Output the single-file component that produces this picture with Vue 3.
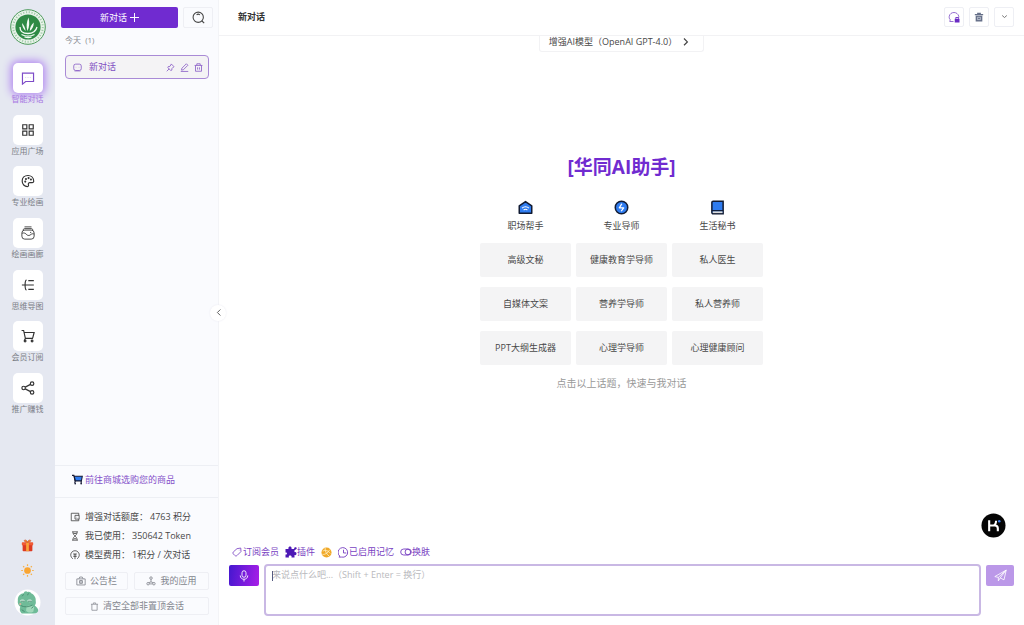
<script setup>
import { ref } from 'vue'

const draft = ref('')
const active = ref('chat')

const navItems = [
  { id: 'chat', label: '智能对话' },
  { id: 'apps', label: '应用广场' },
  { id: 'paint', label: '专业绘画' },
  { id: 'gallery', label: '绘画画廊' },
  { id: 'mind', label: '思维导图' },
  { id: 'cart', label: '会员订阅' },
  { id: 'share', label: '推广赚钱' },
]

const columns = [
  { icon: 'home', title: '职场帮手', topics: ['高级文秘', '自媒体文案', 'PPT大纲生成器'] },
  { icon: 'bolt', title: '专业导师', topics: ['健康教育学导师', '营养学导师', '心理学导师'] },
  { icon: 'book', title: '生活秘书', topics: ['私人医生', '私人营养师', '心理健康顾问'] },
]
</script>

<template>
  <div class="app">
    <aside class="rail">
      <svg class="logo" viewBox="0 0 36 36" aria-label="校徽">
        <circle cx="18" cy="18" r="17.3" fill="#e9f3ea" stroke="#4b9a59" stroke-width="1" />
        <circle cx="18" cy="18" r="14.8" fill="none" stroke="#a3cdab" stroke-width="2" stroke-dasharray="1.200 1.600" />
        <circle cx="18" cy="18" r="12.6" fill="#2f8a45" />
        <path d="M17.500 22c-1.500-4-1-9 1-13.500 1.200 4.500 1 9.500-1 13.500zM15.500 22c-2-2-3.500-5-3.500-8 2 2 3.500 5 3.500 8zM19.800 22c0-3.500 1.500-6.500 4-8.500 0 4-1.500 6.500-4 8.500z" fill="#f3fbf4" />
        <path d="M10 18c0 4 3 6.500 8 6.500s8-2.500 9-6.500M11.500 25.500c4 2 9 2 13 0M14.500 28c2.500.8 5 .8 7 0" fill="none" stroke="#f3fbf4" stroke-width="1.300" />
      </svg>

      <nav class="nav">
        <button
          v-for="item in navItems"
          :key="item.id"
          type="button"
          class="nav-item"
          :class="{ active: active === item.id }"
          @click="active = item.id"
        >
          <span class="nav-box">
            <svg v-if="item.id === 'chat'" viewBox="0 0 24 24" class="line">
              <path d="M2.500 3.500h19V18H8l-5.500 4.500z" />
              <path d="M8 10.500v.6M12 10.500v.6M16 10.500v.6" stroke-width="1.200" />
            </svg>
            <svg v-else-if="item.id === 'apps'" viewBox="0 0 24 24" class="line">
              <path d="M3 3h7v7H3zM14 3h7v7h-7zM3 14h7v7H3zM14 14h7v7h-7z" />
            </svg>
            <svg v-else-if="item.id === 'paint'" viewBox="0 0 24 24" class="line">
              <path d="M12 2.500C6 2.500 2 6.500 2 12s4 9.500 9 9.500c1.800 0 2.300-1.300 1.800-2.700-.8-2.200.2-4 2.500-4H19c2 0 3-1.300 2.800-3C21.500 6 17 2.500 12 2.500z" />
              <circle cx="7.300" cy="13" r=".8" /><circle cx="8.500" cy="8.500" r=".8" /><circle cx="13" cy="7" r=".8" /><circle cx="17" cy="9.500" r=".8" />
            </svg>
            <svg v-else-if="item.id === 'gallery'" viewBox="0 0 24 24" class="line thin">
              <path d="M6 1.500h12M4 7c0-2 1-2.500 2-2.500h12c1 0 2 .5 2 2.500" />
              <rect x="1.500" y="7" width="21" height="15.500" rx="5" />
              <path d="M2 12.500c3-1.500 6 0 8 2.500 2 2 5 1.500 7-.5 2-1.500 4-1.500 5.500-.5M15.500 11h2" />
            </svg>
            <svg v-else-if="item.id === 'mind'" viewBox="0 0 24 24" class="line">
              <path d="M1.500 12h20.500M12.500 4.500h9.500M12.500 19.500h9.500M9.500 3.500c-2.500 0-2.500 3-2.500 8.500s0 8.500 2.500 8.500" />
            </svg>
            <svg v-else-if="item.id === 'cart'" viewBox="0 0 24 24" class="line">
              <path d="M1 2.500h3.500l3 13.500h13M5.500 6h17L20 15.500M7.500 16l-1.500 3.500" />
              <circle cx="7" cy="20.500" r="1.500" /><circle cx="19" cy="20.500" r="1.500" />
            </svg>
            <svg v-else viewBox="0 0 24 24" class="line">
              <circle cx="4.500" cy="12" r="3" /><circle cx="19" cy="4.500" r="3" /><circle cx="19" cy="19.500" r="3" />
              <path d="M7.300 10.500l9-4.700M7.300 13.500l9 4.700" />
            </svg>
          </span>
          <span class="nav-label">{{ item.label }}</span>
        </button>
      </nav>

      <div class="rail-foot">
        <button type="button" class="plain" aria-label="礼物">
          <svg viewBox="0 0 24 24" width="13" height="13">
            <rect x="3" y="10" width="18" height="12.500" rx="1.500" fill="#dd3a22" />
            <rect x="1.500" y="6" width="21" height="5.500" rx="1.200" fill="#f05a35" />
            <rect x="9.500" y="6" width="5" height="16.500" fill="#f9a33c" />
            <path d="M12 6C9 6 5.500 5 6 2.800 6.800.5 11 2 12 6zM12 6c3 0 6.500-1 6-3.200C17.200.5 13 2 12 6z" fill="#f08a2c" stroke="#c9401f" />
          </svg>
        </button>
        <button type="button" class="plain" aria-label="浅色主题">
          <svg viewBox="0 0 24 24" width="13" height="13">
            <circle cx="12" cy="12" r="6.200" fill="#f9a533" />
            <path d="M12 .5v3M12 20.500v3M.5 12h3M20.500 12h3M3.900 3.900L6 6M18 18l2.100 2.100M3.900 20.100L6 18M18 6l2.100-2.100" stroke="#f6b04a" stroke-width="2.200" />
          </svg>
        </button>
        <button type="button" class="plain" aria-label="个人中心">
          <svg viewBox="0 0 28 28" width="27" height="27">
            <circle cx="14" cy="14" r="13.500" fill="#fff" />
            <path d="M4 12C3.500 7.500 7 4.500 10 4.500c.5-2 2.500-3 4-1.500 2-.8 3.500.3 3.700 1.500C21 6 23 9 22.500 12.500c.5 2 0 3.500-1 4.500 2 1.500 4 3.500 3.500 6-1.500 2.500-4 2.500-6 2.500H8c-2-2-2.500-4-1.500-7C4.500 17 3.500 14.500 4 12z" fill="#6fbb98" />
            <path d="M13 18c3-1 6-.5 8 1l-1 4.500c-3 1.500-6 1-7.500-1z" fill="#a0d8ba" />
            <path d="M6 12.500c1.500-2 4-2 5.500 0-1.500 1.500-4 1.500-5.500 0zM13.500 12.500c1.500-2 4-2 5.500 0-1.500 1.500-4 1.500-5.500 0z" fill="#cdeadb" />
            <path d="M7 12.700h4M14.500 12.700h4M7 17c3 2 9 2 12-.5M8 21.500l3 2M8.500 7.500l1.500-2M14 6.500l1-2M18 20l2-1.500" fill="none" stroke="#45886d" stroke-width=".9" />
            <circle cx="6.500" cy="15.500" r="1.100" fill="#dfb39c" />
          </svg>
        </button>
      </div>
    </aside>

    <aside class="side">
      <div class="side-top">
        <button type="button" class="new-chat">
          新对话
          <svg viewBox="0 0 12 12" width="9" height="9"><path d="M6 0v12M0 6h12" stroke="currentColor" stroke-width="1.300" /></svg>
        </button>
        <button type="button" class="box-btn search" aria-label="搜索">
          <svg viewBox="0 0 24 24" width="13" height="13" class="line"><circle cx="11.500" cy="11.500" r="9.500" /><path d="M18 18l4.500 4.500M8.500 7c1.500-1.300 4.500-1.300 6 0" /></svg>
        </button>
      </div>
      <h2 class="group">今天&nbsp; (1)</h2>
      <div class="chat-row">
        <a href="#" class="chat-link">
          <svg viewBox="0 0 24 24" width="9" height="9" class="line"><rect x="2" y="3" width="20" height="17" rx="5" /><path d="M7.500 11.500h1M15.500 11.500h1M4 21.500h16" stroke-width="1.500" /></svg>
          <span>新对话</span>
        </a>
        <button type="button" class="plain" aria-label="置顶">
          <svg viewBox="0 0 24 24" width="9" height="9" class="line"><path d="M14 2.500l7.500 7.500-2 1-3.500 3.500-.5 4.500-3 1-7.500-7.500 1-3 4.500-.5L13 5zM8.500 15.500L2 22" /></svg>
        </button>
        <button type="button" class="plain" aria-label="编辑">
          <svg viewBox="0 0 24 24" width="9" height="9" class="line"><path d="M4 19l1-5L17 2l4 4L9 18zM2 22.500h20" /></svg>
        </button>
        <button type="button" class="plain" aria-label="删除">
          <svg viewBox="0 0 24 24" width="9" height="9" class="line"><path d="M1.500 6.500h21M4 7v15h16V7M7.500 6V2h9v4M9.500 11.500v6M14.500 11.500v6" /></svg>
        </button>
      </div>

      <div class="side-foot">
        <a href="#" class="shop">
          <svg viewBox="0 0 24 24" width="11" height="11">
            <path d="M5 5h17.500L20.500 15H7z" fill="#2f7cf0" stroke="#161a35" stroke-width="2.200" />
            <path d="M0 3h4L7 16l-1 4M20 15v5" fill="none" stroke="#161a35" stroke-width="2.500" />
            <circle cx="7" cy="21" r="1.800" fill="#161a35" /><circle cx="20" cy="21" r="1.800" fill="#161a35" />
          </svg>
          <span>前往商城选购您的商品</span>
        </a>
        <dl class="stats">
          <div>
            <dt>
              <svg viewBox="0 0 24 24" width="10" height="10" class="line"><path d="M21 8V3H3v18h18v-4M12 8h10v9H12zM16 12.500h1" /></svg>
              增强对话额度：
            </dt>
            <dd>4763 积分</dd>
          </div>
          <div>
            <dt>
              <svg viewBox="0 0 24 24" width="10" height="10" class="line"><path d="M5 2h14M5 22h14M7 2c0 6 2.500 7.500 5 10-2.500 2.500-5 4-5 10M17 2c0 6-2.500 7.500-5 10 2.500 2.500 5 4 5 10M8 6h8M9 18.500h6" /></svg>
              我已使用：
            </dt>
            <dd>350642 Token</dd>
          </div>
          <div>
            <dt>
              <svg viewBox="0 0 24 24" width="10" height="10" class="line"><path d="M7 21A10.300 10.300 0 1 1 17 21M8.500 7l3.500 4L15.500 7M12 11V22M8 11.500h8M8 15.500h8" /></svg>
              模型费用：
            </dt>
            <dd>1积分 / 次对话</dd>
          </div>
        </dl>
        <div class="foot-btns">
          <button type="button" class="box-btn foot-btn notice">
            <svg viewBox="0 0 24 24" width="10" height="10" class="line"><path d="M2 7h20v14.500H2zM7 7l2-4.500h6l2 4.500M8.500 11h7v6.500h-7zM12 10v8" /></svg>
            公告栏
          </button>
          <button type="button" class="box-btn foot-btn mine">
            <svg viewBox="0 0 24 24" width="10" height="10" class="line"><circle cx="12" cy="5" r="3" /><path d="M12 8v6M12 14l-5 2M12 14l5 2M8 19h8" /><circle cx="5" cy="18.500" r="3" /><circle cx="19" cy="18.500" r="3" /></svg>
            我的应用
          </button>
          <button type="button" class="box-btn foot-btn clear">
            <svg viewBox="0 0 24 24" width="9" height="9" class="line"><path d="M2.500 6h19M5 6v16h14V6M9 5V2.500h6V5" /></svg>
            清空全部非置顶会话
          </button>
        </div>
      </div>
      <button type="button" class="collapse" aria-label="收起侧栏">
        <svg viewBox="0 0 24 24" width="9" height="9"><path d="M17 4l-8 8 8 8" fill="none" stroke="#555" stroke-width="2.500" /></svg>
      </button>
    </aside>

    <main class="main">
      <header class="head">
        <h1>新对话</h1>
        <div class="head-actions">
          <button type="button" class="box-btn" aria-label="会话锁定">
            <svg viewBox="0 0 24 24" width="12" height="12"><path d="M11 21H3.500l1-3.500C2.500 15.500 2 13 2.500 10.500 3.500 5.500 7.500 3 12 3s8.500 3 9.500 7.500V13" fill="none" stroke="#8a5fcb" stroke-width="1.800" /><rect x="13.500" y="15.500" width="9.500" height="7.500" fill="#6a2bc4" /><path d="M15.500 15.500V13h5.500v2.500" fill="none" stroke="#6a2bc4" stroke-width="1.800" /></svg>
          </button>
          <button type="button" class="box-btn" aria-label="清空会话">
            <svg viewBox="0 0 24 24" width="10" height="10"><path d="M2 4.500h5.500V2h9v2.500H22v3.500H2zM4 9h16V23H4z" fill="#667089" /><rect x="9" y="12.500" width="6" height="6" fill="none" stroke="#d7dbe6" stroke-width="1.600" /></svg>
          </button>
          <button type="button" class="box-btn" aria-label="更多">
            <svg viewBox="0 0 24 24" width="7" height="7"><path d="M4 8.500l8 7 8-7" fill="none" stroke="#666" stroke-width="3" /></svg>
          </button>
        </div>
      </header>

      <button type="button" class="model">
        <span>增强AI模型（OpenAI GPT-4.0）</span>
        <svg viewBox="0 0 12 12" width="9" height="9"><path d="M4 2l4.500 4.500L4 11" fill="none" stroke="#444" stroke-width="1.600" /></svg>
      </button>

      <section class="welcome">
        <h2>[华同AI助手]</h2>
        <div class="columns">
          <div v-for="col in columns" :key="col.title" class="column">
            <svg v-if="col.icon === 'home'" viewBox="0 0 24 24" class="col-icon">
              <path d="M2 9.500L12 2.500l10 7V21H2z" fill="#2f7cf0" stroke="#111b33" stroke-width="2.400" stroke-linejoin="round" />
              <path d="M6.500 13c3-3 8-3 11 0M9 16c2-1.600 4-1.600 6 0" fill="none" stroke="#fff" stroke-width="1.700" />
            </svg>
            <svg v-else-if="col.icon === 'bolt'" viewBox="0 0 24 24" class="col-icon">
              <circle cx="12" cy="12" r="10" fill="#2f7cf0" stroke="#111b33" stroke-width="2.400" />
              <path d="M12.500 6l-4 6.500h7L11.500 18" fill="none" stroke="#fff" stroke-width="2" stroke-linejoin="round" />
            </svg>
            <svg v-else viewBox="0 0 24 24" class="col-icon">
              <path d="M5 2h16v20H5a2 2 0 0 1-2-2V4a2 2 0 0 1 2-2z" fill="#2f7cf0" stroke="#111b33" stroke-width="2.400" />
              <path d="M4.500 18H20v3H4.500z" fill="#ddd" /><path d="M3 17h18" stroke="#111b33" stroke-width="1.800" />
            </svg>
            <h3>{{ col.title }}</h3>
            <button v-for="topic in col.topics" :key="topic" type="button" class="topic" @click="draft = topic">{{ topic }}</button>
          </div>
        </div>
        <p>点击以上话题，快速与我对话</p>
      </section>

      <footer class="composer">
        <div class="tools">
          <a href="#" class="tool tag">
            <svg viewBox="0 0 24 24" width="10" height="10" class="line"><path d="M3 12l9-8 9-1.500 .5 8.500-9 9c-2 2-4 2-6 0l-3-3c-1.500-1.500-1.500-3.500-.5-5zM16.500 7.500h1" /></svg>
            订阅会员
          </a>
          <a href="#" class="tool">
            <svg viewBox="0 0 24 24" width="12" height="12"><path d="M1 6h6c-1-3 1-5 3-5s4 2 3 5h5l1-3c3-2 5.500 1 4 3l-4 2.500v4c3-1 4 1 4 3s-2 3.500-4 2.500V23h-6c1-3-1-4-3-4s-3 1-2 4H1v-6c4 1 4-5 0-4z" fill="#4c18b5" /></svg>
            插件
          </a>
          <a href="#" class="tool" aria-label="网络">
            <svg viewBox="0 0 24 24" width="11" height="11"><circle cx="12" cy="12" r="11" fill="#f0a928" /><path d="M4 9c5-3 11-2 16 5M9 2c-1 6 3 14 9 18M3 16c5 1 11-2 16-10" fill="none" stroke="#fff0c8" stroke-width="1.800" /></svg>
          </a>
          <a href="#" class="tool">
            <svg viewBox="0 0 24 24" width="11" height="11" class="line"><path d="M4 20a10.500 10.500 0 1 1 4 2H2zM12 6v7h6" /></svg>
            已启用记忆
          </a>
          <a href="#" class="tool">
            <svg viewBox="0 0 26 16" width="12" height="8" class="line"><rect x="1.500" y="1.500" width="23" height="13" rx="6.500" /><circle cx="17" cy="8" r="6" /></svg>
            换肤
          </a>
        </div>
        <div class="input-row">
          <button type="button" class="mic" aria-label="语音输入">
            <svg viewBox="0 0 24 24" width="12" height="12"><rect x="8" y="1.500" width="8" height="13" rx="4" fill="none" stroke="#fff" stroke-width="1.800" /><path d="M4.500 11c0 10 15 10 15 0M12 18.500V23" fill="none" stroke="#fff" stroke-width="1.800" /></svg>
          </button>
          <div class="field">
            <textarea v-model="draft" aria-label="消息" placeholder="来说点什么吧...（Shift + Enter = 换行）"></textarea>
            <i class="caret"></i>
          </div>
          <button type="button" class="send" aria-label="发送">
            <svg viewBox="0 0 24 24" width="13" height="13"><path d="M1.500 14L22.500 2l-4 18-7-3.500L8 22v-6.500zM8 15.500L22.500 2l-11 14.500" fill="none" stroke="#fff" stroke-width="1.500" stroke-linejoin="round" /></svg>
          </button>
        </div>
      </footer>

      <button type="button" class="fab" aria-label="助手">
        <svg viewBox="0 0 26 26" width="25" height="25">
          <circle cx="13" cy="13" r="12.500" fill="#050505" />
          <path d="M8.500 7.500v11.500M17.500 19v-3c0-2-1-3-3-3H8.500M12.500 13c2 0 3-1.500 3.200-5" fill="none" stroke="#fff" stroke-width="2.200" />
          <circle cx="19" cy="8.500" r="1.300" fill="#3b82f6" />
        </svg>
      </button>
    </main>
  </div>
</template>

<style>
body {
  margin: 0;
  background: #fff;
}
</style>

<style scoped>
* {
  box-sizing: border-box;
}

.app {
  display: flex;
  height: 100vh;
  overflow: hidden;
  font: 9px/14px "Open Sans", "Noto Sans CJK SC", sans-serif;
  color: #484848;
  background: #fff;
}

h1, h2, h3, p, dl, dd {
  margin: 0;
}

svg {
  display: block;
  flex: none;
}

a {
  color: inherit;
  text-decoration: none;
}

button {
  display: flex;
  align-items: center;
  justify-content: center;
  padding: 0;
  border: 0;
  background: none;
  color: inherit;
  font: inherit;
  white-space: nowrap;
  cursor: pointer;
}

.line {
  fill: none;
  stroke: currentColor;
  stroke-width: 2;
}

.line.thin {
  stroke-width: 1.500;
}

.box-btn {
  border: 1px solid #eeeff4;
  border-radius: 2px;
}

/* Icon rail */
.rail {
  flex: none;
  display: flex;
  flex-direction: column;
  align-items: center;
  width: 55px;
  padding: 9px 0;
  background: #e5e8f1;
}

.logo {
  width: 36px;
  height: 36px;
}

.nav {
  display: flex;
  flex-direction: column;
  justify-content: space-between;
  height: 352px;
  margin-top: 18px;
}

.nav-item {
  flex-direction: column;
  color: #333;
}

.nav-box {
  display: flex;
  align-items: center;
  justify-content: center;
  width: 30px;
  height: 30px;
  border-radius: 5px;
  background: #fff;
}

.nav-box svg {
  width: 14px;
  height: 14px;
}

.nav-label {
  font-size: 8px;
  line-height: 12px;
  color: #7b7e86;
}

.active .nav-box {
  color: #7d4bc8;
  box-shadow: 0 0 8px 2px #b083f0;
}

.active .nav-label {
  color: #a878e2;
}

.rail-foot {
  display: flex;
  flex-direction: column;
  align-items: center;
  gap: 12px;
  margin-top: auto;
}

/* Conversation list */
.side {
  position: relative;
  flex: none;
  display: flex;
  flex-direction: column;
  width: 164px;
  background: #fafbfe;
  border-right: 1px solid #f3f4f7;
}

.side-top {
  display: flex;
  gap: 5px;
  padding: 7px 5px 0 6px;
}

.new-chat {
  flex: 1;
  gap: 3px;
  height: 21px;
  border-radius: 2px;
  background: #702bd0;
  color: #fff;
}

.search {
  width: 30px;
  height: 21px;
}

.group {
  margin: 5px 10px 0;
  font-size: 8px;
  font-weight: 400;
  color: #888b92;
}

.chat-row {
  display: flex;
  align-items: center;
  gap: 5px;
  height: 24px;
  margin: 8px 9px 0 10px;
  padding: 0 5px 0 7px;
  border: 1px solid #a98ad6;
  border-radius: 4px;
  background: #f4f3f5;
  color: #7f4fc2;
}

.chat-link {
  flex: 1;
  display: flex;
  align-items: center;
  gap: 7px;
}

.side-foot {
  margin-top: auto;
}

.shop {
  display: flex;
  align-items: center;
  gap: 2px;
  height: 33px;
  padding: 0 17px 4px;
  border: solid #edeff4;
  border-width: 1px 0;
  color: #8450c9;
}

.stats {
  display: grid;
  gap: 5px;
  padding: 12px 15px 10px;
}

.stats div {
  display: flex;
  align-items: center;
  gap: 2px;
}

.stats dt {
  display: flex;
  align-items: center;
  gap: 5px;
}

.foot-btns {
  display: grid;
  grid-template-columns: 63fr 75fr;
  gap: 7px 6px;
  padding: 0 9px 10px 10px;
  color: #83868e;
}

.foot-btn {
  gap: 4px;
  height: 18px;
}

.clear {
  grid-column: span 2;
}

.collapse {
  position: absolute;
  top: 50%;
  right: -8px;
  width: 16px;
  height: 16px;
  transform: translateY(-50%);
  border-radius: 50%;
  background: #fff;
  box-shadow: 0 0 2px #e8e8f0;
}

/* Conversation area */
.main {
  position: relative;
  flex: 1;
  min-width: 0;
  display: flex;
  flex-direction: column;
}

.head {
  display: flex;
  align-items: center;
  justify-content: space-between;
  height: 36px;
  padding: 0 10px 2px 19px;
  border-bottom: 1px solid #f2f2f4;
}

.head h1 {
  font-size: 9px;
  color: #333;
}

.head-actions {
  display: flex;
  gap: 5px;
}

.head-actions .box-btn {
  width: 20px;
  height: 20px;
}

.model {
  align-self: center;
  gap: 4px;
  height: 16px;
  padding: 0 13px 4px 9px;
  border: 1px solid #f2f2f4;
  border-top: 0;
  border-radius: 0 0 3px 3px;
}

.welcome {
  margin-top: 101px;
  text-align: center;
}

.welcome h2 {
  font-size: 19px;
  line-height: 28px;
  color: #702bd0;
}

.columns {
  display: flex;
  justify-content: center;
  gap: 5px;
  margin-top: 19px;
}

.column {
  display: flex;
  flex-direction: column;
  align-items: center;
  width: 91px;
}

.col-icon {
  width: 15px;
  height: 15px;
}

.column h3 {
  margin: 4px 0 10px;
  font-size: 9px;
  font-weight: 400;
}

.topic {
  width: 100%;
  height: 34px;
  border-radius: 2px;
  background: #f4f4f5;
}

.topic + .topic {
  margin-top: 10px;
}

.welcome p {
  margin-top: 11px;
  font-size: 10px;
  color: #999;
}

.composer {
  margin-top: auto;
  padding: 0 10px 9px;
}

.tools {
  display: flex;
  align-items: center;
  gap: 6px;
  padding: 0 3px;
  color: #7841c2;
}

.tool {
  display: flex;
  align-items: center;
}

.tag {
  gap: 1px;
}

.input-row {
  display: flex;
  align-items: flex-start;
  gap: 5px;
  margin-top: 5px;
}

.mic,
.send {
  flex: none;
  width: 30px;
  height: 21px;
  margin-top: 1px;
  border-radius: 2px;
}

.mic {
  background: linear-gradient(100deg, #4417cf, #a91fe8);
}

.send {
  width: 28px;
  background: #bb98e8;
}

.field {
  position: relative;
  flex: 1;
}

textarea {
  display: block;
  width: 100%;
  height: 52px;
  padding: 2px 6px;
  border: 2px solid #c9b8e4;
  border-radius: 4px;
  outline: 0;
  resize: none;
  background: #fff;
  color: #333;
  font: inherit;
}

textarea::placeholder {
  color: #b9b9bd;
}

.caret {
  position: absolute;
  top: 7px;
  left: 8px;
  width: 1px;
  height: 10px;
  background: #555a80;
}

.fab {
  position: absolute;
  right: 18px;
  bottom: 87px;
}
</style>
